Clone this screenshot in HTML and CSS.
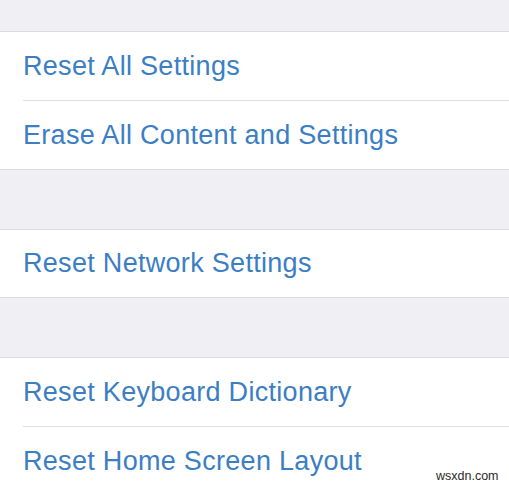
FILE: index.html
```html
<!DOCTYPE html>
<html lang="en">
<head>
    <meta charset="UTF-8">
    <meta name="viewport" content="width=device-width, initial-scale=1.0">
    <title>Reset</title>
    <link rel="stylesheet" href="styles.css">
</head>
<body>

    <div class="screen">
        <div class="spacer top"></div>

        <div class="group">
            <div class="row">Reset All Settings</div>
            <div class="row">Erase All Content and Settings</div>
        </div>

        <div class="spacer"></div>

        <div class="group">
            <div class="row short">Reset Network Settings</div>
        </div>

        <div class="spacer"></div>

        <div class="group">
            <div class="row">Reset Keyboard Dictionary</div>
            <div class="row">Reset Home Screen Layout</div>
        </div>

        <span class="mark">wsxdn.com</span>
    </div>

</body>
</html>
```

FILE: styles.css
```css
/* Settings > General > Reset */
body {
    margin: 0;
    padding: 0;
    background: #efeff4;
    font-family: "Liberation Sans", Arial, sans-serif;
}

.screen {
    position: relative;
    width: 509px;
    height: 487px;
    overflow: hidden;
}

.spacer {
    height: 59px;
}

.spacer.top {
    height: 31px;
}

.group {
    background: #fff;
    border-top: 1px solid #dcdce0;
    border-bottom: 1px solid #dcdce0;
    padding-left: 23px;
}

.row {
    height: 68px;
    display: flex;
    align-items: center;
    color: #3b7ec4;
    font-size: 27px;
    letter-spacing: 0.3px;
}

.row.short {
    height: 67px;
}

.row + .row {
    border-top: 1px solid #e0e0e4;
}

.mark {
    position: absolute;
    left: 436px;
    top: 469px;
    font-size: 12.5px;
    color: #2a2a2a;
}
```
